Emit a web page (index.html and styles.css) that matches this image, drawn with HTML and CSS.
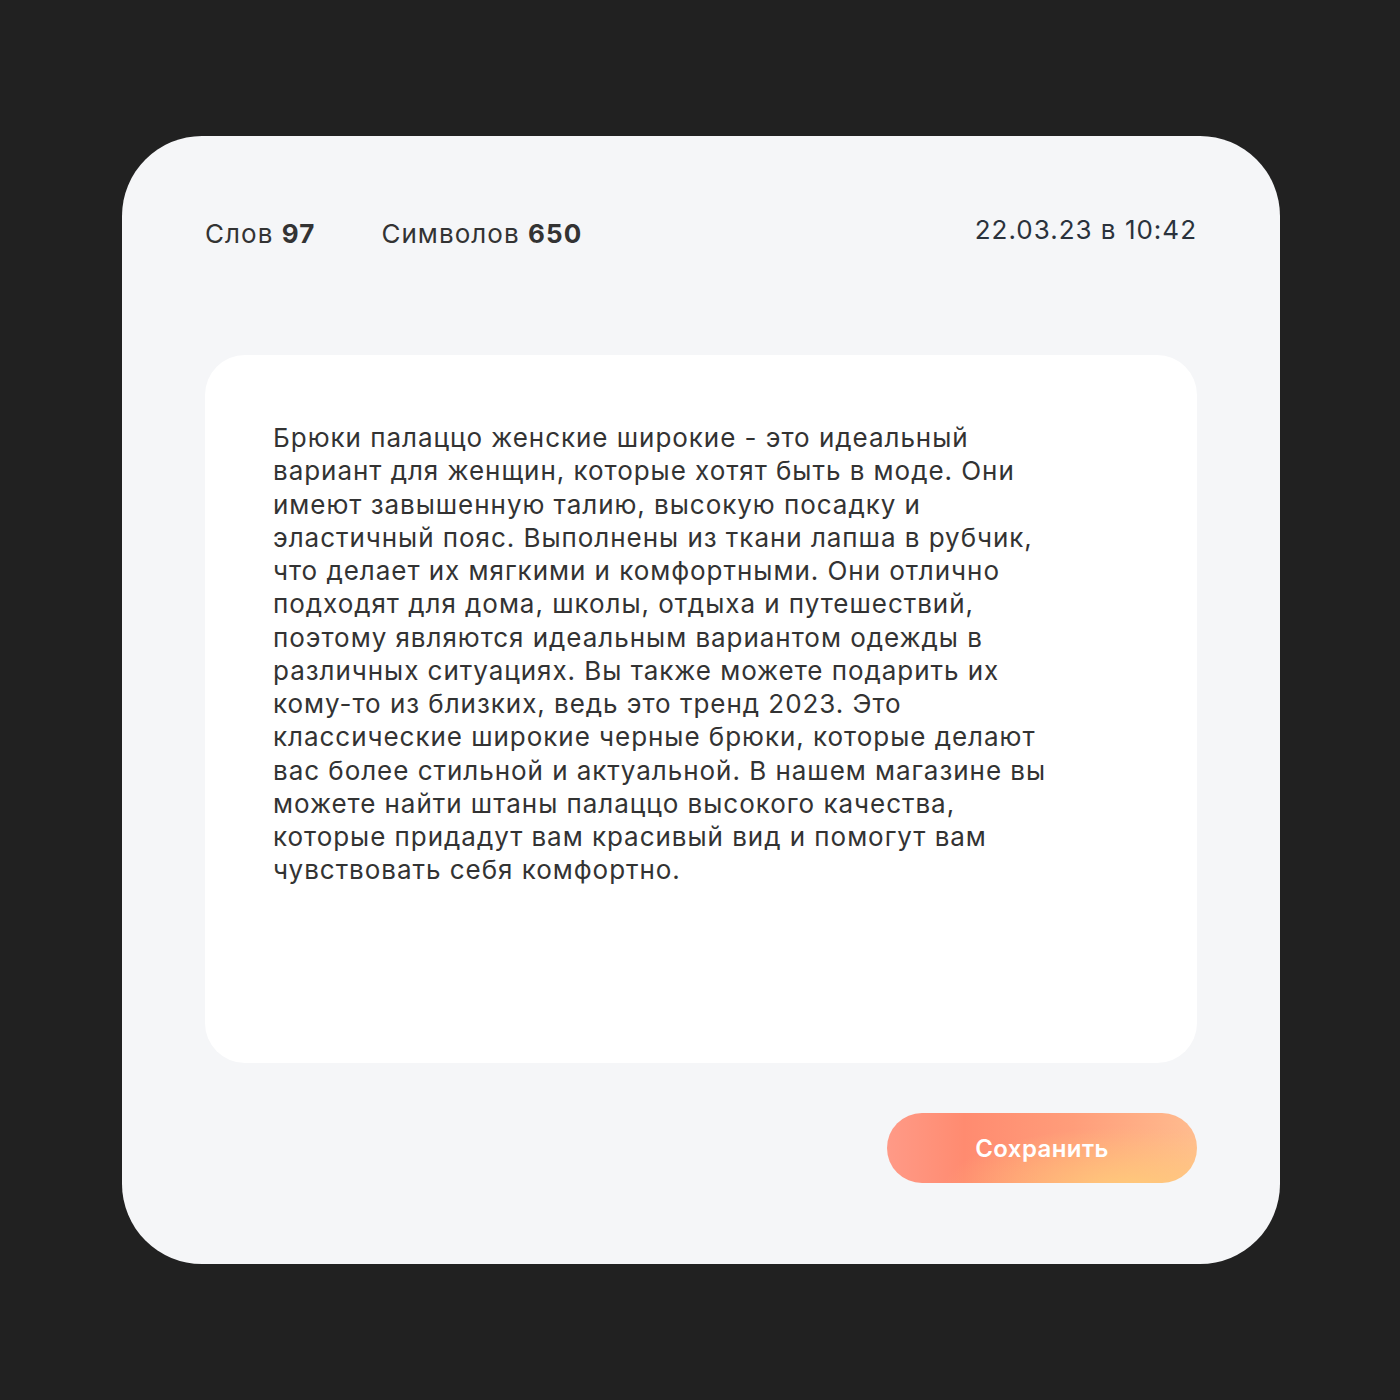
FILE: index.html
```html
<!DOCTYPE html>
<html lang="ru">
<head>
<meta charset="utf-8">
<link rel="stylesheet" href="styles.css">
</head>
<body>
<div class="card">
  <div class="header">
    <div class="stats">
      <span class="stat">Слов <b>97</b></span>
      <span class="stat">Символов <b>650</b></span>
    </div>
    <div class="date">22.03.23 в 10:42</div>
  </div>
  <div class="editor">
    <p class="text">Брюки палаццо женские широкие - это идеальный вариант для женщин, которые хотят быть в моде. Они имеют завышенную талию, высокую посадку и эластичный пояс. Выполнены из ткани лапша в рубчик, что делает их мягкими и комфортными. Они отлично подходят для дома, школы, отдыха и путешествий, поэтому являются идеальным вариантом одежды в различных ситуациях. Вы также можете подарить их кому-то из близких, ведь это тренд 2023. Это классические широкие черные брюки, которые делают вас более стильной и актуальной. В нашем магазине вы можете найти штаны палаццо высокого качества, которые придадут вам красивый вид и помогут вам чувствовать себя комфортно.</p>
  </div>
  <div class="actions">
    <button class="save">Сохранить</button>
  </div>
</div>
</body>
</html>
```
FILE: styles.css
```css
html, body {
  margin: 0;
  padding: 0;
  background: #212121;
  font-family: Inter, "Noto Sans", sans-serif;
}
body {
  width: 1400px;
  height: 1400px;
  padding-top: 136px;
  box-sizing: border-box;
}
.card {
  margin-left: 122px;
  width: 1158px;
  height: 1128px;
  box-sizing: border-box;
  background: #f5f6f8;
  border-radius: 80px;
  padding: 81px 83px;
  display: flex;
  flex-direction: column;
}
.header {
  display: flex;
  justify-content: space-between;
  align-items: flex-start;
  height: 32px;
  margin-bottom: 106px;
}
.stats {
  display: flex;
  gap: 66px;
  padding-top: 1px;
}
.stat {
  font-size: 26px;
  line-height: 32px;
  letter-spacing: 1.05px;
  color: #333333;
}
.stat b {
  font-weight: 700;
}
.date {
  font-size: 26px;
  line-height: 26px;
  letter-spacing: 1px;
  color: #2a323c;
}
.editor {
  height: 708px;
  background: #ffffff;
  border-radius: 40px;
  padding: 66px 68px;
  box-sizing: border-box;
}
.text {
  margin: 0;
  width: 780px;
  font-size: 26px;
  line-height: 33.25px;
  letter-spacing: 0.96px;
  color: #333333;
}
.actions {
  display: flex;
  justify-content: flex-end;
  margin-top: 50px;
}
.save {
  width: 310px;
  height: 70px;
  border: none;
  border-radius: 35px;
  font-family: Inter, "Noto Sans", sans-serif;
  font-size: 24px;
  font-weight: 600;
  letter-spacing: 0.4px;
  color: #ffffff;
  background:
    radial-gradient(ellipse 60% 90% at 78% 110%, rgba(255, 204, 122, 0.95) 0%, rgba(255, 200, 122, 0) 100%),
    linear-gradient(90deg, #ff9a87 0%, #ff8b70 25%, #ff9d7a 60%, #ffbc8f 100%);
}
```
